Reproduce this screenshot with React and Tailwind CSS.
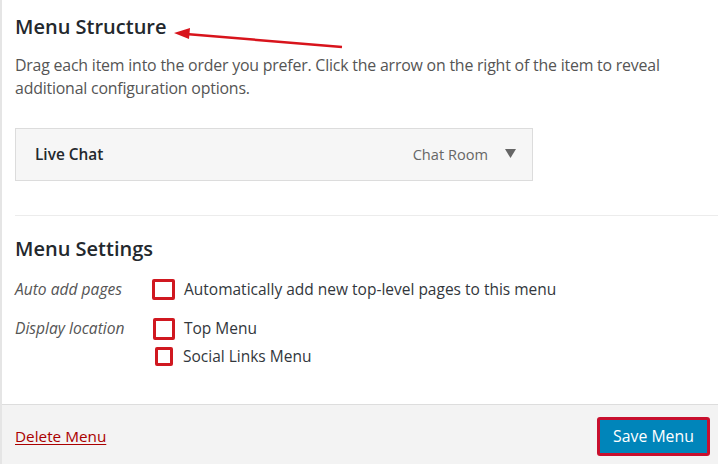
import React from "react";

function Box({ cls }) {
  return <span className={`inline-block shrink-0 border-[3px] border-[#d01820] rounded-[2px] bg-white ${cls}`} />;
}

export default function App() {
  return (
    <div className="w-[718px] h-[464px] bg-white flex flex-col border-l-2 border-[#e5e5e5] relative overflow-hidden" style={{ fontFamily: '"Open Sans", "Noto Sans", sans-serif' }}>
      <div className="flex-1 pl-[13px] pr-4">
        <h2 className="mt-[13px] text-[20px] leading-[28px] font-semibold text-[#23282d]">Menu Structure</h2>
        <p className="mt-[13px] text-[15.9px] leading-[23px] text-[#555] tracking-[-0.2px] w-[675px]">
          Drag each item into the order you prefer. Click the arrow on the right of the item to reveal additional configuration options.
        </p>
        <div className="mt-[28px] w-[518px] h-[53px] bg-[#f6f6f6] border border-[#dcdcdc] flex items-center pl-[19px] pr-[16px]">
          <span className="text-[15.4px] font-semibold text-[#23282d]">Live Chat</span>
          <span className="ml-auto text-[14.6px] text-[#666]">Chat Room</span>
          <svg width="11" height="9" viewBox="0 0 11 9" className="ml-[17px] mb-[3px]"><path d="M0 0 L11 0 L5.5 9 Z" fill="#666" /></svg>
        </div>
        <div className="mt-[34px] border-t border-[#ececec] -mr-4" />
        <h3 className="mt-[19px] text-[20px] leading-[28px] font-semibold text-[#23282d]">Menu Settings</h3>
        <div className="mt-[15px] flex items-center">
          <span className="w-[137px] text-[15.6px] italic text-[#555]">Auto add pages</span>
          <Box cls="w-[23px] h-[21px]" />
          <span className="ml-[9px] text-[15.5px] text-[#32373c]">Automatically add new top-level pages to this menu</span>
        </div>
        <div className="mt-[16px] flex">
          <span className="w-[138px] text-[15.6px] italic text-[#555] leading-[22px]">Display location</span>
          <div className="flex flex-col">
            <div className="flex items-center">
              <Box cls="w-[22px] h-[22px]" />
              <span className="ml-[9px] text-[15.5px] text-[#32373c]">Top Menu</span>
            </div>
            <div className="flex items-center mt-[4px]">
              <Box cls="w-[18px] h-[19px] ml-[2px]" />
              <span className="ml-[10px] text-[15.5px] text-[#32373c]">Social Links Menu</span>
            </div>
          </div>
        </div>
      </div>
      <div className="h-[60px] bg-[#f3f3f3] border-t border-[#dddddd] flex items-center pl-[13px] pr-[8px]">
        <span className="text-[15.3px] text-[#a00] underline underline-offset-2 mt-[3px]">Delete Menu</span>
        <button className="ml-auto mt-[4px] w-[113px] h-[39px] border-[3px] border-[#c8102e] rounded-[3px] bg-[#0085ba] text-white text-[15.8px] flex items-center justify-center">Save Menu</button>
      </div>
      <svg className="absolute left-0 top-0" width="718" height="464" style={{ pointerEvents: "none" }}>
        <line x1="340" y1="47" x2="184" y2="34" stroke="#d8141c" strokeWidth="2.5" />
        <path d="M172 33 L188 28 L187 39 Z" fill="#d8141c" />
      </svg>
    </div>
  );
}
